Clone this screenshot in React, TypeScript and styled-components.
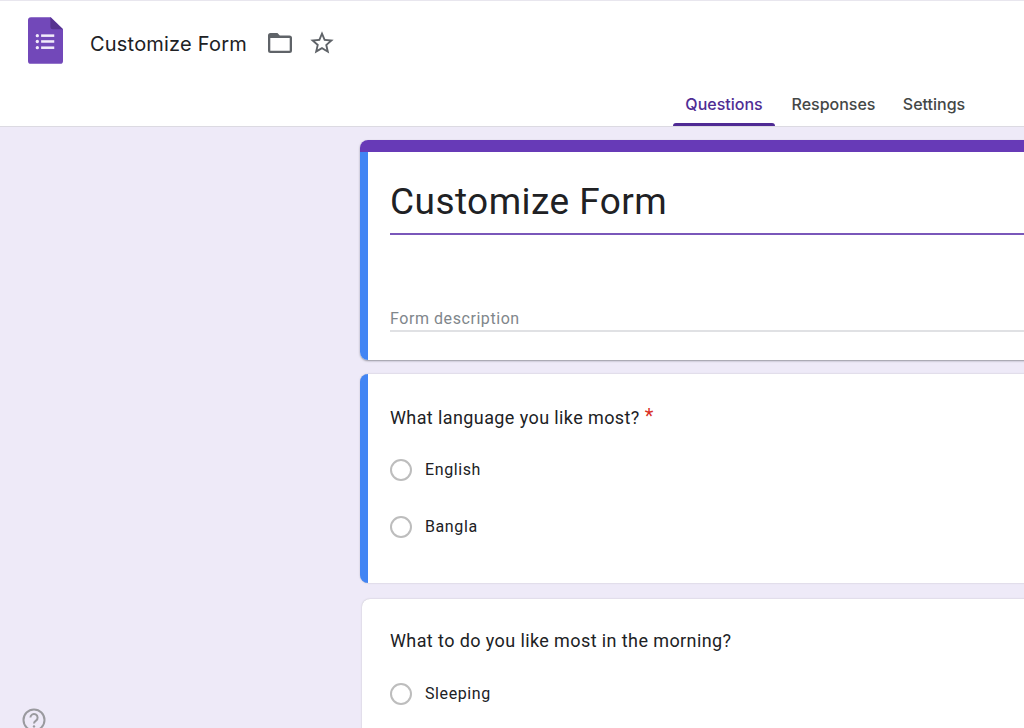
import React from "react";
import styled, { createGlobalStyle } from "styled-components";

const Global = createGlobalStyle`
  html, body { margin: 0; padding: 0; height: 100%; overflow: hidden; background: #eeeaf8; }
  * { box-sizing: border-box; }
`;

const Page = styled.div`
  width: 1024px;
  height: 728px;
  overflow: hidden;
  position: relative;
  background: #eeeaf8;
  font-family: Roboto, "Liberation Sans", sans-serif;
`;

const Header = styled.header`
  height: 127px;
  background: #fff;
  border-top: 1px solid #e8e6ee;
  border-bottom: 1px solid #dcdae2;
  display: flex;
  flex-direction: column;
`;

const TitleRow = styled.div`
  height: 84px;
  padding: 16px 0 0 28px;
  display: flex;
  align-items: flex-start;
`;

const DocTitle = styled.h1`
  margin: 15px 0 0 27px;
  font: 400 20px/24px Inter, "Open Sans", sans-serif;
  letter-spacing: 0.2px;
  color: #202124;
`;

const IconSlot = styled.span<{ $left: number; $top: number }>`
  margin: ${(p) => p.$top}px 0 0 ${(p) => p.$left}px;
  display: flex;
  color: #5f6368;
`;

const Tabs = styled.nav`
  display: flex;
  padding-left: 673px;
  height: 41px;
`;

const Tab = styled.div<{ $active?: boolean; $width: number }>`
  width: ${(p) => p.$width}px;
  height: 41px;
  padding-top: 9px;
  display: flex;
  flex-direction: column;
  text-align: center;
  font: 500 16px/20px Inter, Roboto, sans-serif;
  color: ${(p) => (p.$active ? "#4f2d94" : "#444746")};

  &::after {
    content: "";
    margin-top: auto;
    height: 3px;
    border-radius: 3px 3px 0 0;
    background: ${(p) => (p.$active ? "#4f2a94" : "transparent")};
  }
`;

const Main = styled.main`
  padding: 13px 0 0 360px;
  display: flex;
  flex-direction: column;
  width: 1200px;
`;

const TitleCard = styled.section`
  height: 220px;
  border-radius: 8px;
  background: #fff;
  overflow: hidden;
  box-shadow: 0 1px 2px rgba(60, 64, 67, 0.5);
  display: flex;
  flex-direction: column;
`;

const AccentBar = styled.div`
  height: 12px;
  flex: none;
  background: #673ab7;
`;

const TitleBody = styled.div`
  flex: 1;
  border-left: 8px solid #4285f4;
  padding: 29px 0 0 22px;
`;

const FormTitle = styled.div`
  height: 54px;
  border-bottom: 2px solid #7a57ba;
  font: 400 37px/42px Roboto, sans-serif;
  letter-spacing: 0.45px;
  color: #202124;
`;

const FormDescription = styled.div`
  margin-top: 71px;
  height: 26px;
  border-bottom: 2px solid #e0e1e4;
  font: 400 16px/25px Roboto, sans-serif;
  letter-spacing: 0.56px;
  color: #80868b;
`;

const QuestionCard = styled.section<{ $selected?: boolean; $height: number; $gap: number; $top: number }>`
  margin-top: ${(p) => p.$gap}px;
  margin-left: ${(p) => (p.$selected ? 0 : 2)}px;
  height: ${(p) => p.$height}px;
  border-radius: 8px;
  background: #fff;
  border-left: ${(p) => (p.$selected ? "8px solid #4285f4" : "none")};
  box-shadow: 0 0 1.5px rgba(60, 64, 67, 0.35);
  padding: ${(p) => p.$top}px 0 0 ${(p) => (p.$selected ? 22 : 28)}px;
`;

const Question = styled.div`
  font: 400 18px/24px Roboto, sans-serif;
  letter-spacing: 0.4px;
  color: #202124;
  display: flex;
`;

const Required = styled.span`
  color: #d93025;
  margin-left: 5px;
  font-size: 20px;
  line-height: 20px;
`;

const Options = styled.div<{ $top: number }>`
  margin-top: ${(p) => p.$top}px;
  display: flex;
  flex-direction: column;
  gap: 33px;
`;

const Option = styled.label`
  display: flex;
  align-items: center;
  gap: 13px;
  height: 24px;
  font: 400 16px/24px Roboto, sans-serif;
  letter-spacing: 0.6px;
  color: #202124;
`;

const Radio = styled.span`
  width: 22px;
  height: 22px;
  border-radius: 50%;
  border: 2px solid #bdbdbd;
  background: #fff;
  flex: none;
`;

const Help = styled.div`
  position: absolute;
  left: 22px;
  top: 708px;
  color: #9a9a9f;
  display: flex;
`;

const FormsLogo = () => (
  <svg width="35" height="47" viewBox="0 0 36 48" aria-hidden="true">
    <path d="M3 0h20.5L36 12.5V45a3 3 0 0 1-3 3H3a3 3 0 0 1-3-3V3a3 3 0 0 1 3-3z" fill="#7248b9" />
    <path d="M23 0l13 12.5H25.5A2.5 2.5 0 0 1 23 10z" fill="#56338f" />
    <g fill="#f1ebfa">
      <circle cx="9.6" cy="19" r="1.7" />
      <circle cx="9.6" cy="25" r="1.7" />
      <circle cx="9.6" cy="31.4" r="1.7" />
      <rect x="13.5" y="17.7" width="13.5" height="2.6" />
      <rect x="13.5" y="23.7" width="13.5" height="2.6" />
      <rect x="13.5" y="30.1" width="13.5" height="2.6" />
    </g>
  </svg>
);

const FolderIcon = () => (
  <svg width="24" height="20" viewBox="0 0 24 20" aria-hidden="true">
    <path
      fill="currentColor"
      d="M9.4 0l2.4 2.5h9.7A2.5 2.5 0 0 1 24 5v12.5a2.5 2.5 0 0 1-2.5 2.5h-19A2.5 2.5 0 0 1 0 17.5v-15A2.5 2.5 0 0 1 2.5 0h6.9zM2.3 5v12.7h19.4V5H2.3z"
    />
  </svg>
);

const StarIcon = () => (
  <svg width="28" height="28" viewBox="0 0 24 24" aria-hidden="true">
    <path
      fill="currentColor"
      d="M22 9.24l-7.19-.62L12 2 9.19 8.63 2 9.24l5.46 4.73L5.82 21 12 17.27 18.18 21l-1.63-7.03L22 9.24zM12 15.4l-3.76 2.27 1-4.28-3.32-2.88 4.38-.38L12 6.1l1.71 4.04 4.38.38-3.32 2.88 1 4.28L12 15.4z"
    />
  </svg>
);

const HelpIcon = () => (
  <svg width="24" height="24" viewBox="0 0 24 24" fill="none" aria-hidden="true">
    <circle cx="12" cy="12" r="10.5" stroke="currentColor" strokeWidth="2" />
    <path d="M8.4 9.6a3.6 3.6 0 1 1 5.6 3c-1.3.9-2 1.5-2 3" stroke="currentColor" strokeWidth="2" />
    <circle cx="12" cy="18.4" r="1.2" fill="currentColor" />
  </svg>
);

export default function App() {
  return (
    <Page>
      <Global />
      <Header>
        <TitleRow>
          <FormsLogo />
          <DocTitle>Customize Form</DocTitle>
          <IconSlot $left={21} $top={16}>
            <FolderIcon />
          </IconSlot>
          <IconSlot $left={16} $top={12}>
            <StarIcon />
          </IconSlot>
        </TitleRow>
        <Tabs>
          <Tab $active $width={102}>Questions</Tab>
          <Tab $width={117}>Responses</Tab>
          <Tab $width={84}>Settings</Tab>
        </Tabs>
      </Header>
      <Main>
        <TitleCard>
          <AccentBar />
          <TitleBody>
            <FormTitle>Customize Form</FormTitle>
            <FormDescription>Form description</FormDescription>
          </TitleBody>
        </TitleCard>
        <QuestionCard $selected $height={209} $gap={14} $top={32}>
          <Question>
            What language you like most?
            <Required>*</Required>
          </Question>
          <Options $top={28}>
            <Option>
              <Radio />
              English
            </Option>
            <Option>
              <Radio />
              Bangla
            </Option>
          </Options>
        </QuestionCard>
        <QuestionCard $height={300} $gap={16} $top={30}>
          <Question>What to do you like most in the morning?</Question>
          <Options $top={29}>
            <Option>
              <Radio />
              Sleeping
            </Option>
          </Options>
        </QuestionCard>
      </Main>
      <Help>
        <HelpIcon />
      </Help>
    </Page>
  );
}
